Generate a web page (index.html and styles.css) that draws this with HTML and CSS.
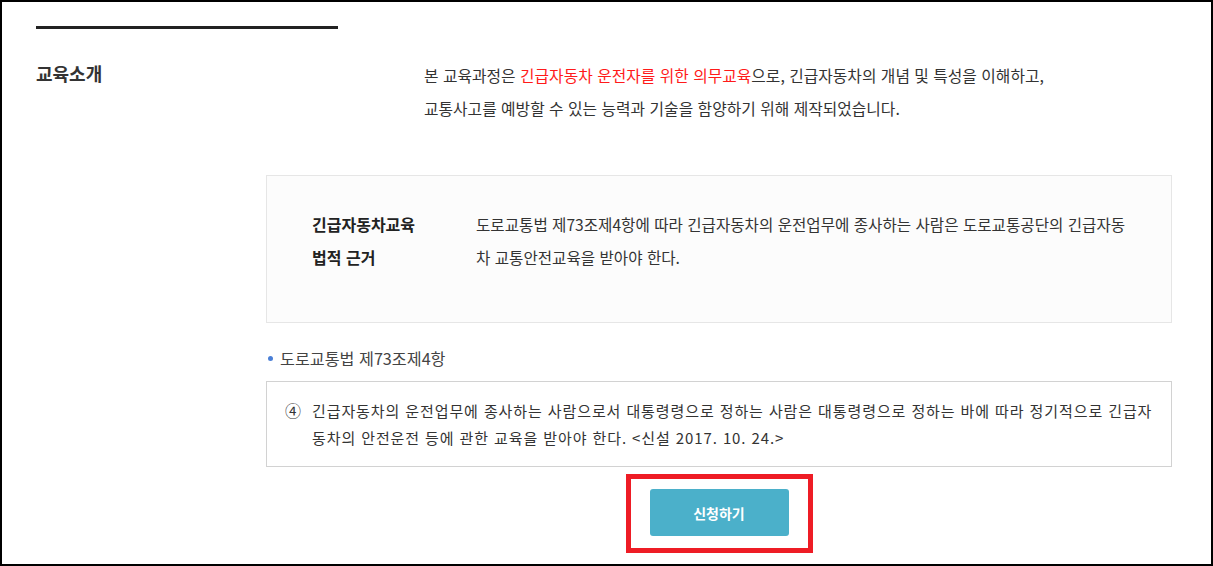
FILE: index.html
```html
<!DOCTYPE html>
<html lang="ko">
<head>
<meta charset="utf-8">
<title>교육소개</title>
<link rel="stylesheet" href="styles.css">
</head>
<body>
<div class="frame">
  <div class="rule"></div>
  <section class="intro">
    <h2 class="intro-label">교육소개</h2>
    <p class="intro-text">본 교육과정은 <span class="red">긴급자동차 운전자를 위한 의무교육</span>으로, 긴급자동차의 개념 및 특성을 이해하고,<br>교통사고를 예방할 수 있는 능력과 기술을 함양하기 위해 제작되었습니다.</p>
  </section>
  <div class="content">
    <div class="basis">
      <div class="basis-label">긴급자동차교육<br>법적 근거</div>
      <div class="basis-text">도로교통법 제73조제4항에 따라 긴급자동차의 운전업무에 종사하는 사람은 도로교통공단의 긴급자동차 교통안전교육을 받아야 한다.</div>
    </div>
    <div class="law-title"><span class="dot"></span>도로교통법 제73조제4항</div>
    <div class="law-box">
      <span class="law-num">④</span>
      <p class="law-text">긴급자동차의 운전업무에 종사하는 사람으로서 대통령령으로 정하는 사람은 대통령령으로 정하는 바에 따라 정기적으로 긴급자동차의 안전운전 등에 관한 교육을 받아야 한다. &lt;신설 2017. 10. 24.&gt;</p>
    </div>
    <div class="btn-row">
      <div class="highlight">
        <button class="apply" type="button">신청하기</button>
      </div>
    </div>
  </div>
</div>
</body>
</html>
```
FILE: styles.css
```css
* { box-sizing: border-box; }
html, body { margin: 0; padding: 0; background: #fff; }
body {
  font-family: "Noto Sans CJK KR", "Noto Sans", "Liberation Sans", sans-serif;
  color: #333;
}
.frame {
  width: 1213px;
  height: 566px;
  border: 2px solid #000;
  padding: 24px 0 0 34px;
  overflow: hidden;
}
.rule {
  width: 302px;
  height: 3px;
  background: #222;
}
.intro {
  display: flex;
  margin-top: 30px;
}
.intro-label {
  width: 388px;
  flex: none;
  margin: 0;
  font-size: 18px;
  font-weight: 700;
  line-height: 29px;
  color: #333;
}
.intro-text {
  margin: 0;
  font-size: 15.8px;
  line-height: 33px;
  color: #333;
}
.red { color: #ff1a1a; }
.content {
  margin-left: 230px;
  width: 906px;
}
.basis {
  margin-top: 50px;
  height: 148px;
  background: #fcfcfc;
  border: 1px solid #e6e6e6;
  display: flex;
  padding: 32px 30px 0 45px;
}
.basis-label {
  width: 164px;
  flex: none;
  font-size: 16px;
  font-weight: 700;
  line-height: 33px;
  color: #222;
}
.basis-text {
  width: 655px;
  font-size: 15.6px;
  line-height: 33px;
  color: #333;
}
.law-title {
  margin-top: 23px;
  display: flex;
  align-items: center;
  font-size: 16.2px;
  line-height: 24px;
  color: #444;
}
.dot {
  width: 5px;
  height: 5px;
  border-radius: 50%;
  background: #4a7fd6;
  margin: 0 7px 0 2px;
}
.law-box {
  margin-top: 11px;
  border: 1px solid #d2d2d2;
  display: flex;
  padding: 15px 10px 15px 18px;
  height: 86px;
}
.law-num {
  width: 27px;
  flex: none;
  font-size: 16px;
  line-height: 27px;
  color: #333;
}
.law-text {
  margin: 0;
  width: 849px;
  font-size: 15px;
  letter-spacing: 0.9px;
  line-height: 27px;
  color: #333;
}
.btn-row {
  display: flex;
  justify-content: center;
  margin-top: 7px;
}
.highlight {
  border: 5px solid #ee1c25;
  padding: 10px 19px 12px;
}
.apply {
  display: block;
  width: 139px;
  height: 47px;
  border: 0;
  border-radius: 3px;
  background: #4bb0ca;
  color: #fff;
  font-family: inherit;
  font-size: 14px;
  font-weight: 700;
}
```
